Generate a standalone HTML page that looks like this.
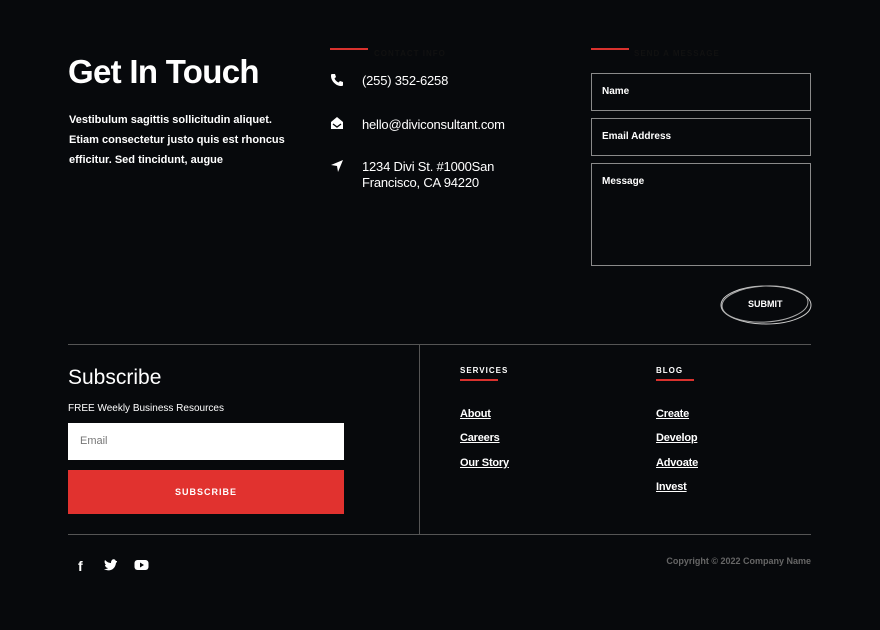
<!DOCTYPE html>
<html><head><style>
*{margin:0;padding:0;box-sizing:border-box}
body{width:880px;height:630px;background:#07090c;font-family:"Liberation Sans",sans-serif;color:#fff;position:relative;overflow:hidden}
.a{position:absolute}
.red{background:#d9322e;height:2px}
.in{position:absolute;border:1px solid #8a8a8a;font-size:10px;font-weight:bold;padding:0 10px}
a{color:#fff;font-size:11px;font-weight:bold;text-decoration:underline}
</style></head><body>
<div class="a" style="left:68px;top:53px;font-size:33px;font-weight:bold;letter-spacing:-0.7px">Get In Touch</div>
<div class="a" style="left:69px;top:110px;font-size:11px;font-weight:bold;line-height:20px;width:220px">Vestibulum sagittis sollicitudin aliquet. Etiam consectetur justo quis est rhoncus efficitur. Sed tincidunt, augue</div>

<div class="a red" style="left:330px;top:48px;width:38px"></div>
<div class="a" style="left:374px;top:49px;font-size:8px;font-weight:bold;color:#111;letter-spacing:1px">CONTACT INFO</div>
<svg class="a" style="left:330px;top:73px" width="14" height="14" viewBox="0 0 14 14"><path d="M2 1l3 0 1 3-1.5 1.5c1 2 2 3 4 4L10 8l3 1v3c0 1-1 1-2 1C6 13 1 8 1 3c0-1 0-2 1-2z" fill="#fff"/></svg>
<div class="a" style="left:362px;top:73px;font-size:13px;letter-spacing:-0.2px">(255) 352-6258</div>
<svg class="a" style="left:330px;top:116px" width="14" height="14" viewBox="0 0 14 14"><path d="M1 6L7 1l6 5v7H1z" fill="#fff"/><path d="M3 8l4 3 4-3" stroke="#07090c" stroke-width="1.3" fill="none"/></svg>
<div class="a" style="left:362px;top:117px;font-size:13px;letter-spacing:-0.2px">hello@diviconsultant.com</div>
<svg class="a" style="left:330px;top:159px" width="14" height="14" viewBox="0 0 14 14"><path d="M13 1L1 6l6 1 1 6z" fill="#fff"/></svg>
<div class="a" style="left:362px;top:159px;font-size:13px;line-height:16px;letter-spacing:-0.2px">1234 Divi St. #1000San<br>Francisco, CA 94220</div>

<div class="a red" style="left:591px;top:48px;width:38px"></div>
<div class="a" style="left:634px;top:49px;font-size:8px;font-weight:bold;color:#111;letter-spacing:1px">SEND A MESSAGE</div>
<div class="in" style="left:591px;top:73px;width:220px;height:38px;line-height:36px">Name</div>
<div class="in" style="left:591px;top:118px;width:220px;height:38px;line-height:36px">Email Address</div>
<div class="in" style="left:591px;top:163px;width:220px;height:103px;padding-top:12px">Message</div>
<svg class="a" style="left:718px;top:282px" width="96" height="46"><ellipse cx="48" cy="23" rx="45" ry="19" fill="none" stroke="#ccc" stroke-width="1"/><ellipse cx="47" cy="22" rx="43" ry="18" fill="none" stroke="#aaa" stroke-width="1" transform="rotate(-3 47 22)"/></svg>
<div class="a" style="left:748px;top:299px;font-size:9px;font-weight:bold">SUBMIT</div>

<div class="a" style="left:68px;top:344px;width:743px;height:1px;background:#555"></div>
<div class="a" style="left:419px;top:344px;width:1px;height:190px;background:#555"></div>
<div class="a" style="left:68px;top:534px;width:743px;height:1px;background:#555"></div>

<div class="a" style="left:68px;top:366px;font-size:21px">Subscribe</div>
<div class="a" style="left:68px;top:403px;font-size:10px">FREE Weekly Business Resources</div>
<div class="a" style="left:68px;top:423px;width:276px;height:37px;background:#fff;color:#777;font-size:11px;line-height:37px;padding-left:12px">Email</div>
<div class="a" style="left:68px;top:470px;width:276px;height:44px;background:#e1322f;font-size:9px;font-weight:bold;letter-spacing:1px;text-align:center;line-height:44px">SUBSCRIBE</div>

<div class="a" style="left:460px;top:366px;font-size:8px;font-weight:bold;letter-spacing:1px">SERVICES</div>
<div class="a red" style="left:460px;top:379px;width:38px"></div>
<div class="a" style="left:460px;top:402px;font-size:11px;line-height:24.4px;letter-spacing:-0.2px"><a>About</a><br><a>Careers</a><br><a>Our Story</a></div>
<div class="a" style="left:656px;top:366px;font-size:8px;font-weight:bold;letter-spacing:1px">BLOG</div>
<div class="a red" style="left:656px;top:379px;width:38px"></div>
<div class="a" style="left:656px;top:402px;font-size:11px;line-height:24.4px;letter-spacing:-0.2px"><a>Create</a><br><a>Develop</a><br><a>Advoate</a><br><a>Invest</a></div>

<div class="a" style="left:78px;top:558px;font-size:14px;font-weight:bold">f</div>
<svg class="a" style="left:104px;top:559px" width="14" height="12" viewBox="0 0 14 12"><path d="M13 2c-1 0-1 0-1.5-.5C11 0 9 0 8 1 7 2 7 3 7 4 4 4 2 2 1 1 0 3 1 5 2 6H1c0 1 1 3 3 3-1 1-2 1-4 1 5 3 11 1 12-6 1-1 1-1 1-2z" fill="#fff"/></svg>
<svg class="a" style="left:134px;top:559px" width="15" height="12" viewBox="0 0 15 12"><rect x="0.5" y="1" width="14" height="10" rx="3" fill="#fff"/><path d="M6 3.5v5l4-2.5z" fill="#07090c"/></svg>
<div class="a" style="right:69px;top:556px;font-size:9px;color:#666;font-weight:bold">Copyright © 2022 Company Name</div>
</body></html>
